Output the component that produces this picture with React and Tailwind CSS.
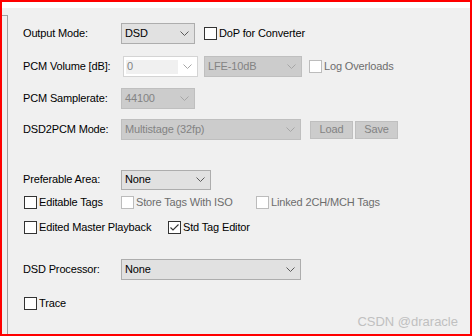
import React from 'react';

const Chevron = ({ disabled }) => (
    <svg width="9" height="5" viewBox="0 0 9 5" className="shrink-0">
        <polyline points="0.5,0.5 4.5,4.5 8.5,0.5" fill="none" stroke={disabled ? '#a6a6a6' : '#5a5a5a'} strokeWidth="1" />
    </svg>
);

const Dropdown = ({ value, width, disabled, h = 'h-[21px]' }) => (
    <div
        className={`${h} flex items-center justify-between border pl-[3px] pr-[5px] ${disabled ? 'bg-[#cccccc] border-[#bfbfbf] text-[#838383]' : 'bg-[#e1e1e1] border-[#adadad] text-black'}`}
        style={{ width }}
    >
        <span>{value}</span>
        <Chevron disabled={disabled} />
    </div>
);

const Checkbox = ({ label, checked, disabled }) => (
    <div className="flex items-center">
        <div className={`w-[13px] h-[13px] shrink-0 border bg-white flex items-center justify-center ${disabled ? 'border-[#bcbcbc]' : 'border-[#333333]'}`}>
            {checked && (
                <svg width="11" height="11" viewBox="0 0 11 11">
                    <polyline points="1.5,5.5 4,8 9.5,2.5" fill="none" stroke="#333333" strokeWidth="1.1" />
                </svg>
            )}
        </div>
        <span className={`ml-[2px] whitespace-nowrap ${disabled ? 'text-[#6d6d6d]' : 'text-black'}`}>{label}</span>
    </div>
);

const Button = ({ children }) => (
    <div className="w-[43px] h-[18px] flex items-center justify-center bg-[#cccccc] border border-[#bfbfbf] text-[#838383]">
        {children}
    </div>
);

const Label = ({ children }) => <div className="w-[98px] shrink-0 whitespace-nowrap">{children}</div>;

export default function App() {
    return (
        <div className="relative w-[472px] h-[336px] border-2 border-[#ff0000] bg-[#f0f0f0] flex flex-col overflow-hidden text-[11px] tracking-[-0.15px] text-black font-['Liberation_Sans',Arial,sans-serif]">
            <div className="h-[6px] bg-white shrink-0" />
            <div className="flex flex-1">
                <div className="w-[6px] mt-[7px] border-t border-r border-[#a0a0a0] shrink-0" />
                <div className="flex flex-col pl-[15px] pt-[15px]">
                    <div className="h-[21px] flex items-center">
                        <Label>Output Mode:</Label>
                        <Dropdown value="DSD" width={74} />
                        <div className="ml-[9px]">
                            <Checkbox label="DoP for Converter" />
                        </div>
                    </div>

                    <div className="h-[21px] mt-[12px] flex items-center">
                        <Label>PCM Volume [dB]:</Label>
                        <div className="ml-[2px] w-[75px] h-[21px] flex items-center justify-between bg-white border border-[#d4d4d4] pl-[2px] pr-[5px]">
                            <div className="w-[52px] h-[14px] bg-[#f0f0f0] flex items-center pl-[1px] text-[#838383]">0</div>
                            <Chevron disabled />
                        </div>
                        <div className="ml-[6px]">
                            <Dropdown value="LFE-10dB" width={98} disabled />
                        </div>
                        <div className="ml-[7px]">
                            <Checkbox label="Log Overloads" disabled />
                        </div>
                    </div>

                    <div className="h-[21px] mt-[11px] flex items-center">
                        <Label>PCM Samplerate:</Label>
                        <Dropdown value="44100" width={74} disabled />
                    </div>

                    <div className="h-[21px] mt-[10px] flex items-center">
                        <Label>DSD2PCM Mode:</Label>
                        <Dropdown value="Multistage (32fp)" width={180} disabled />
                        <div className="ml-[9px] flex gap-[2px]">
                            <Button>Load</Button>
                            <Button>Save</Button>
                        </div>
                    </div>

                    <div className="h-[21px] mt-[29px] flex items-center">
                        <Label>Preferable Area:</Label>
                        <Dropdown value="None" width={90} h="h-[20px]" />
                    </div>

                    <div className="h-[13px] mt-[6px] flex items-center">
                        <div className="w-[98px] pl-[1px]">
                            <Checkbox label="Editable Tags" />
                        </div>
                        <div className="w-[135px]">
                            <Checkbox label="Store Tags With ISO" disabled />
                        </div>
                        <Checkbox label="Linked 2CH/MCH Tags" disabled />
                    </div>

                    <div className="h-[13px] mt-[12px] flex items-center">
                        <div className="w-[145px] pl-[1px]">
                            <Checkbox label="Edited Master Playback" />
                        </div>
                        <Checkbox label="Std Tag Editor" checked />
                    </div>

                    <div className="h-[21px] mt-[25px] flex items-center">
                        <Label>DSD Processor:</Label>
                        <Dropdown value="None" width={180} />
                    </div>

                    <div className="h-[13px] mt-[17px] flex items-center pl-[1px]">
                        <Checkbox label="Trace" />
                    </div>
                </div>
            </div>
            <div className="absolute right-[12px] bottom-[3px] text-[13px] tracking-normal text-[#c0c0c0]">CSDN @draracle</div>
        </div>
    );
}
